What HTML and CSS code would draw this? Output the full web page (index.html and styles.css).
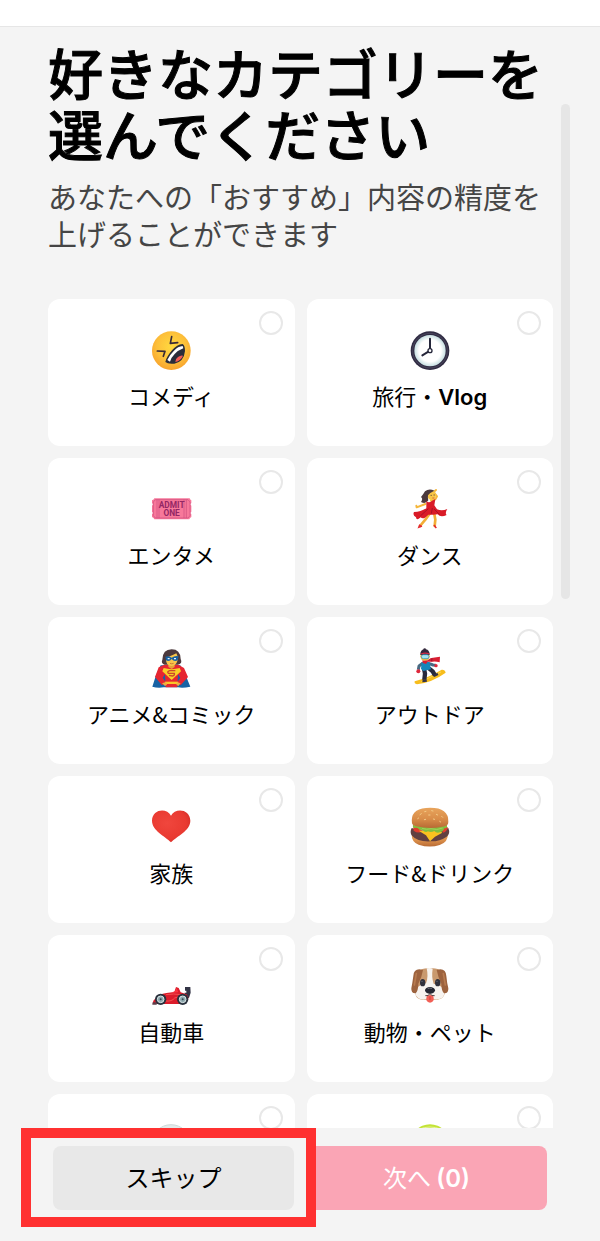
FILE: index.html
```html
<!DOCTYPE html>
<html lang="ja">
<head>
<meta charset="utf-8">
<meta name="viewport" content="width=device-width, initial-scale=1">
<title>好きなカテゴリーを選んでください</title>
<link rel="stylesheet" href="styles.css">
</head>
<body>
<header class="topbar"></header>
<div class="body-area">
<main class="scroller">
  <h1 class="title">好きなカテゴリーを選んでください</h1>
  <p class="subtitle">あなたへの「おすすめ」内容の精度を上げることができます</p>
  <div class="grid">
    <label class="card">
      <input class="check" type="checkbox">
      <svg class="emoji" viewBox="32 34 120 120" aria-hidden="true">
        <defs><radialGradient id="face" cx=".5" cy=".4" r=".62"><stop offset="0" stop-color="#ffd93f"/><stop offset=".6" stop-color="#fdc03a"/><stop offset="1" stop-color="#f7a12c"/></radialGradient></defs>
        <circle cx="93" cy="93" r="58" fill="url(#face)"/>
        <path d="M94 51 90 71 112 69M51 94 74 95 69 110" fill="none" stroke="#3a2b38" stroke-width="5" stroke-linejoin="round" stroke-linecap="round"/>
        <path d="M127 73Q134 78 134 94Q131 126 102 132Q82 134 75 127Q78 112 95 92Q110 74 127 73Z" fill="#292c3a"/>
        <path d="M81 121Q88 105 101 93Q113 80 127 79L129 86Q113 92 103 103Q92 114 89 126Z" fill="#fff"/>
        <path d="M105 127Q105 117 113 112Q121 106 128 108Q122 123 105 127Z" fill="#f35a55"/>
      </svg>
      <span class="name">コメディ</span>
    </label>
    <label class="card">
      <input class="check" type="checkbox">
      <svg class="emoji" viewBox="29 34 120 120" aria-hidden="true">
        <defs><radialGradient id="dial"><stop offset=".7" stop-color="#fff"/><stop offset="1" stop-color="#c7dfe2"/></radialGradient></defs>
        <circle cx="89" cy="93" r="58" fill="#302c43"/>
        <circle cx="89" cy="93" r="52" fill="none" stroke="#56516a" stroke-width="2"/>
        <circle cx="89" cy="93" r="47" fill="url(#dial)"/>
        <path d="M89 93V57M89 93 66 107" stroke="#25263a" stroke-width="6" stroke-linecap="round"/>
        <circle cx="89" cy="93" r="6" fill="#fff" stroke="#25263a" stroke-width="4"/>
      </svg>
      <span class="name">旅行・<span class="latin">Vlog</span></span>
    </label>
    <label class="card">
      <input class="check" type="checkbox">
      <svg class="emoji" viewBox="32 30 120 120" aria-hidden="true">
        <path d="M42 55H148Q149 60 153 61V69L150 73 153 77V95L150 99 153 103V111Q148 113 147 118H42Q41 113 35 111V103L38 99 35 95V77L38 73 35 69V61Q41 60 42 55Z" fill="#f7789a"/>
        <path d="M45 59H143L149 66V107L143 114H45L39 107V66ZM50 59V114M56 59V114M131 59V114M138 59V114" fill="none" stroke="#cf4d7e" stroke-width="2"/>
        <text class="ticket-text" x="94" y="85" text-anchor="middle">ADMIT</text>
        <text class="ticket-text" x="94" y="109" text-anchor="middle">ONE</text>
      </svg>
      <span class="name">エンタメ</span>
    </label>
    <label class="card">
      <input class="check" type="checkbox">
      <svg class="emoji" viewBox="29 30 120 120" aria-hidden="true">
        <path d="M89 100 75 119 59 138M102 102 105 119 103 138" fill="none" stroke="#f2ae36" stroke-width="8" stroke-linecap="round" stroke-linejoin="round"/>
        <path d="M75 72 49 82 48 77M106 56 110 49 100 36 107 30M92 62 103 59" fill="none" stroke="#f5b73c" stroke-width="6" stroke-linecap="round" stroke-linejoin="round"/>
        <ellipse cx="94" cy="46" rx="13" ry="15" fill="#f9c646"/>
        <path d="M102 32Q86 24 74 34Q69 43 62 51Q69 56 62 66Q76 74 84 61Q82 52 83 46Q88 38 102 32Z" fill="#4c393d"/>
        <path d="M78 63Q86 71 94 63L105 57 102 76 110 88Q125 94 141 87Q133 99 139 105Q121 113 112 103L98 104 84 104Q69 121 61 112Q48 124 47 112Q36 107 41 96Q61 96 78 85Z" fill="#d91b27"/>
        <path d="M84 86 60 108M101 87 118 104M96 84 93 101" stroke="#a91028" stroke-width="3"/>
        <path d="M59 134 56 141 65 138M101 135 106 142 108 144" fill="none" stroke="#e32a30" stroke-width="5"/>
        <path d="M91 46h3M100 45h3" stroke="#4c393d" stroke-width="3"/><path d="M96 54h6" stroke="#cc3838" stroke-width="2"/>
      </svg>
      <span class="name">ダンス</span>
    </label>
    <label class="card">
      <input class="check" type="checkbox">
      <svg class="emoji" viewBox="32 34 120 120" aria-hidden="true">
        <path d="M61 83H120L136 113 150 147Q128 152 113 149H70Q52 152 36 147L47 113Z" fill="#1863a4"/>
        <path d="M72 81 55 89 44 118 65 143 76 134 67 120 74 110 76 149H111L113 110 120 120 111 134 121 143 143 118 131 91 114 81Z" fill="#e62631"/>
        <path d="M84 76H103V88L94 94 84 88Z" fill="#e8a338"/>
        <path d="M73 81Q61 77 66 66Q67 35 94 35Q120 35 121 64Q128 78 112 81Z" fill="#4d3a3d"/>
        <path d="M77 60Q96 54 108 47L113 59Q112 76 103 82Q93 88 84 82Q76 77 77 60Z" fill="#f9c64a"/>
        <path d="M75 57Q85 54 94 60Q105 52 115 56L112 68Q101 73 94 64Q87 73 77 68Z" fill="#1762a4"/>
        <path d="M82 63h6M101 63h6" stroke="#e8f4ff" stroke-width="4"/>
        <path d="M70 91Q94 98 118 91L122 101 94 127 66 101Z" fill="#f9cf27"/>
        <path d="M105 99H88Q79 102 84 107H102Q104 113 96 115L86 113" fill="none" stroke="#cc482a" stroke-width="4"/>
        <path d="M74 132H113V139H74Z" fill="#f9c629"/><path d="M65 137 77 133 80 141 74 145M121 137 111 133 108 141 114 145" fill="#f0ac40"/>
        <path d="M89 77Q94 80 100 77" fill="none" stroke="#b7562d" stroke-width="2"/>
      </svg>
      <span class="name">アニメ&amp;コミック</span>
    </label>
    <label class="card">
      <input class="check" type="checkbox">
      <svg class="emoji" viewBox="29 34 120 120" aria-hidden="true">
        <path d="M43 131Q82 121 124 96Q134 95 136 105Q96 134 50 140Q41 138 43 131Z" fill="#f7bd1c"/>
        <path d="M63 132 122 103" stroke="#ffda50" stroke-width="3"/>
        <path d="M71 93 74 108 72 126M86 92 97 101 104 113" fill="none" stroke="#292a3b" stroke-width="13" stroke-linejoin="round"/>
        <path d="M67 124 79 126 80 132 66 134M98 111 112 106 114 112 102 118Z" fill="#353346"/>
        <path d="M67 77 56 85 54 96M85 77 98 82 106 83" fill="none" stroke="#496a83" stroke-width="9" stroke-linejoin="round"/>
        <path d="M64 73H87L92 95 69 100 62 94Z" fill="#1686ba"/>
        <circle cx="54" cy="101" r="6" fill="#de283b"/><circle cx="107" cy="84" r="5" fill="#de283b"/>
        <circle cx="74" cy="56" r="14" fill="#f6bd42"/>
        <path d="M60 52Q59 35 74 35Q88 35 88 52Z" fill="#33273b"/><circle cx="73" cy="36" r="4" fill="#33273b"/>
        <path d="M62 49Q75 44 87 49" fill="none" stroke="#d42a46" stroke-width="4"/>
        <rect x="63" y="51" width="23" height="12" rx="6" fill="#a7e4f1" stroke="#238bb3" stroke-width="2"/>
        <path d="M66 68Q79 73 90 62L98 60 119 57 118 74Q107 71 97 72L82 72 77 79 67 76Z" fill="#d91e32"/><path d="M95 62 94 71" stroke="#8f1732" stroke-width="3"/>
      </svg>
      <span class="name">アウトドア</span>
    </label>
    <label class="card">
      <input class="check" type="checkbox">
      <svg class="emoji" viewBox="32 34 120 120" aria-hidden="true">
        <defs><radialGradient id="heart" cx=".4" cy=".4" r=".7"><stop stop-color="#f0463d"/><stop offset=".7" stop-color="#e93a31"/><stop offset="1" stop-color="#cf2b27"/></radialGradient></defs>
        <path d="M92 57C80 33 36 36 35 72C35 102 74 118 92 137C110 118 150 102 150 72C149 36 104 33 92 57Z" fill="url(#heart)"/>
      </svg>
      <span class="name">家族</span>
    </label>
    <label class="card">
      <input class="check" type="checkbox">
      <svg class="emoji" viewBox="29 34 120 120" aria-hidden="true">
        <defs><linearGradient id="bun" x2="0" y2="1"><stop stop-color="#e8a45c"/><stop offset=".55" stop-color="#d98d49"/><stop offset="1" stop-color="#b86a34"/></linearGradient></defs>
        <path d="M34 111Q88 134 143 110Q144 137 118 145Q88 155 55 144Q33 136 34 111Z" fill="url(#bun)"/>
        <path d="M34 94Q88 113 144 94Q151 111 139 120Q117 135 90 134Q52 136 35 117Q27 108 34 94Z" fill="#624040"/>
        <path d="M39 91 52 89 66 104Q54 112 40 102ZM128 91 142 91Q143 101 130 108L121 100Z" fill="#e23c2e"/>
        <path d="M55 102 116 101 126 108 104 120 89 134 77 116Z" fill="#fac220"/>
        <path d="M38 85Q88 91 140 84Q142 96 132 95Q129 105 119 107Q108 111 102 103Q92 109 83 104Q74 109 67 100L57 99Q52 91 43 94Q36 93 38 85Z" fill="#82bf3e"/>
        <path d="M65 95Q79 100 92 96Q109 102 127 94" fill="none" stroke="#a1d15d" stroke-width="3"/>
        <path d="M35 80Q29 38 77 34Q145 29 144 75Q145 88 126 90Q89 98 48 89Q37 87 35 80Z" fill="url(#bun)"/>
        <path d="M59 54 63 51M73 45 77 44M85 55 89 55M94 42 98 43M108 53 112 55M124 59 127 62M52 66 55 64M72 69 76 68M99 67 103 68M118 74 121 76" stroke="#f3ca86" stroke-width="3" stroke-linecap="round"/>
      </svg>
      <span class="name">フード&amp;ドリンク</span>
    </label>
    <label class="card">
      <input class="check" type="checkbox">
      <svg class="emoji" viewBox="32 34 120 120" aria-hidden="true">
        <path d="M134 94H150L151 111 146 127H133V111H138V105H134Z" fill="#333446"/>
        <path d="M39 135Q56 115 78 112L102 109 107 94 115 97 121 110 139 116 145 127 129 145H68L37 144Z" fill="#db1c2b"/>
        <path d="M77 117Q100 113 123 117M75 136Q95 138 103 127L119 122" fill="none" stroke="#f55050" stroke-width="3"/>
        <path d="M93 111 104 106 109 97 114 110Z" fill="#fa3540"/><path d="M37 140H49V147H36Z" fill="#5c3d4a"/>
        <circle cx="61" cy="131" r="17" fill="#29313d"/><circle cx="127" cy="131" r="17" fill="#29313d"/>
        <circle cx="61" cy="131" r="10" fill="#8fa9af" stroke="#dae7e8" stroke-width="3"/><circle cx="127" cy="131" r="10" fill="#8fa9af" stroke="#dae7e8" stroke-width="3"/>
        <circle cx="61" cy="131" r="3" fill="#354752"/><circle cx="127" cy="131" r="3" fill="#354752"/>
      </svg>
      <span class="name">自動車</span>
    </label>
    <label class="card">
      <input class="check" type="checkbox">
      <svg class="emoji" viewBox="29 34 120 120" aria-hidden="true">
        <path d="M53 47Q67 36 88 38Q111 35 124 47Q134 66 130 92Q141 128 112 132H65Q38 129 47 93Q43 65 53 47Z" fill="#c9996e"/>
        <path d="M79 38Q89 35 97 39Q93 64 100 84Q115 87 129 96Q138 119 123 128Q105 137 88 125Q72 137 54 128Q39 117 48 97Q60 86 77 83Q85 64 79 38Z" fill="#f7f3ef"/>
        <path d="M57 41Q40 41 39 61Q36 83 33 98Q32 114 46 113Q54 104 54 84Q65 63 68 43ZM120 41Q137 42 138 61Q140 82 144 98Q145 114 131 113Q123 104 123 84Q113 64 109 43Z" fill="#9d633e"/>
        <path d="M48 54 42 88M129 54 135 88" stroke="#b77b50" stroke-width="5" stroke-linecap="round"/>
        <ellipse cx="67" cy="81" rx="8" ry="11" fill="#30313c"/><ellipse cx="112" cy="81" rx="8" ry="11" fill="#30313c"/>
        <circle cx="65" cy="77" r="2" fill="#657080"/><circle cx="110" cy="77" r="2" fill="#657080"/>
        <path d="M79 122Q74 140 89 141Q104 140 99 122Q90 114 79 122Z" fill="#f26056"/><path d="M89 122V133" stroke="#c93e3b" stroke-width="3"/>
        <path d="M75 120Q84 122 89 114Q94 122 103 120" fill="none" stroke="#5a4544" stroke-width="3"/>
        <ellipse cx="89" cy="104" rx="15" ry="10" fill="#242631"/><path d="M82 99Q88 96 95 99" stroke="#666974" stroke-width="3" fill="none"/>
      </svg>
      <span class="name">動物・ペット</span>
    </label>
    <div class="card">
      <input class="check" type="checkbox" aria-label="スポーツ">
      <svg class="emoji" viewBox="0 0 120 120" aria-hidden="true"><circle cx="60" cy="55" r="59" fill="#e3eaea" stroke="#ced9d9" stroke-width="3"/></svg>
    </div>
    <div class="card">
      <input class="check" type="checkbox" aria-label="テニス">
      <svg class="emoji" viewBox="0 0 120 120" aria-hidden="true"><circle cx="60" cy="55" r="60" fill="#c3e336"/><path d="M26 10Q60 -4 94 10" stroke="#e6f3a0" stroke-width="3" fill="none"/></svg>
    </div>
  </div>
</main>
<div class="thumb"></div>
</div>
<footer class="actions">
  <div class="highlight"><button class="btn skip" type="button">スキップ</button></div>
  <button class="btn next" type="button">次へ <span class="latin">(0)</span></button>
</footer>
</body>
</html>
```
FILE: styles.css
```css
* { box-sizing: border-box; }

body {
  margin: 0;
  height: 100vh;
  display: flex;
  flex-direction: column;
  background: #f4f4f4;
  color: #000;
  font-family: "Noto Sans CJK JP", sans-serif;
}

.topbar {
  flex: none;
  height: 27px;
  background: #fff;
  border-bottom: 1px solid #e6e6e6;
}

.body-area {
  position: relative;
  flex: 1;
  min-height: 0;
}

.scroller {
  height: 100%;
  padding: 14px 47px 0 48px;
  overflow-y: auto;
  scrollbar-width: none;
}

.title {
  margin: 0;
  font-size: 55px;
  line-height: 61px;
  font-weight: 500;
  -webkit-text-stroke: 1px #000;
}

.subtitle {
  margin: 15px 0 47px;
  font-size: 29px;
  line-height: 37px;
  font-weight: 400;
  color: #454545;
}

.grid {
  display: grid;
  grid-template-columns: 1fr 1fr;
  gap: 12px;
}

.card {
  position: relative;
  display: flex;
  flex-direction: column;
  align-items: center;
  padding: 32px 12px 0;
  height: 147px;
  gap: 8px;
  background: #fff;
  border-radius: 12px;
}

.check {
  appearance: none;
  position: absolute;
  top: 12px;
  right: 12px;
  width: 24px;
  height: 24px;
  margin: 0;
  border: 2px solid #e8e8e8;
  border-radius: 50%;
  background: #fff;
}

.check:checked { background: #fe2c55; }

.emoji {
  width: 40px;
  height: 40px;
  overflow: visible;
}

.ticket-text {
  font: 700 25px "Liberation Sans Narrow", "Roboto", sans-serif;
  fill: #932664;
}

.name {
  font-size: 22px;
  line-height: 32px;
}

.latin {
  font-family: "Inter", sans-serif;
  font-weight: 600;
  line-height: 1;
}

.thumb {
  position: absolute;
  top: 77px;
  right: 30px;
  width: 9px;
  height: 45%;
  border-radius: 5px;
  background: #e6e6e6;
}

.actions {
  flex: none;
  display: grid;
  grid-template-columns: 1fr 1fr;
  gap: 12px;
  padding: 18px 53px 31px;
}

.highlight { position: relative; }

.highlight::after {
  content: "";
  position: absolute;
  inset: -18px -22px -17px -32px;
  border: 10px solid #ff3131;
  pointer-events: none;
  z-index: 1;
}

.btn {
  width: 100%;
  height: 64px;
  padding: 0 0 2px;
  border: 0;
  border-radius: 8px;
  font-family: inherit;
  font-size: 24px;
  line-height: 36px;
}

.skip { background: #e8e8e8; color: #000; }
.next { background: #faa5b5; color: #fff; }
```
